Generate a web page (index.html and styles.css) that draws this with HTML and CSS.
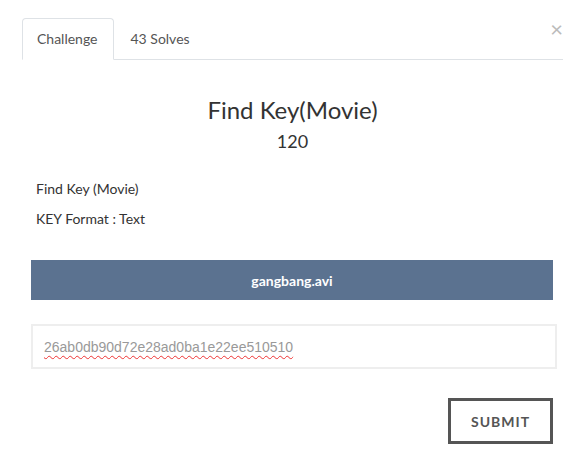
FILE: index.html
```html
<!DOCTYPE html>
<html>
<head>
<meta charset="utf-8">
<link rel="stylesheet" href="styles.css">
</head>
<body>
<div class="modal">
  <span class="close">&times;</span>
  <div class="tabs">
    <div class="tab active">Challenge</div>
    <div class="tab">43 Solves</div>
  </div>
  <h2 class="title">Find Key(Movie)</h2>
  <div class="value">120</div>
  <div class="body">
    <div class="desc">
      <p>Find Key (Movie)</p>
      <p>KEY Format : Text</p>
    </div>
    <div class="file">gangbang.avi</div>
    <div class="answer"><span class="typed">26ab0db90d72e28ad0ba1e22ee510510</span></div>
    <div class="actions"><button class="submit">SUBMIT</button></div>
  </div>
</div>
</body>
</html>
```
FILE: styles.css
```css
html, body {
  margin: 0;
  background: #fff;
}
body {
  font-family: Lato, "Noto Sans", sans-serif;
  color: #333;
}
.modal {
  position: relative;
  padding: 18px 15px 0 22px;
}
.close {
  position: absolute;
  top: 18px;
  right: 15px;
  font-size: 22px;
  line-height: 22px;
  color: #bbb;
}
.tabs {
  display: flex;
  border-bottom: 1px solid #dee2e6;
  height: 41px;
}
.tab {
  padding: 0 14px;
  line-height: 40px;
  font-size: 14px;
  color: #555;
  border: 1px solid transparent;
  border-radius: 4px 4px 0 0;
  margin-bottom: -1px;
  margin-right: 2px;
}
.tab.active {
  padding-right: 15px;
  border-color: #dee2e6 #dee2e6 #fff;
  background: #fff;
}
.title {
  margin: 35px 0 0;
  text-align: center;
  font-size: 24px;
  font-weight: 400;
  line-height: 29px;
}
.value {
  margin-top: 6px;
  text-align: center;
  font-size: 18px;
  line-height: 22px;
}
.body {
  padding: 0 10px 0 9px;
}
.desc {
  margin-top: 27px;
  padding-left: 5px;
  font-size: 14px;
}
.desc p {
  margin: 0 0 10px;
  line-height: 20px;
}
.desc p:last-child {
  margin-bottom: 0;
}
.file {
  margin-top: 31px;
  height: 40px;
  background: #5b7290;
  color: #fff;
  font-weight: 700;
  font-size: 14px;
  display: flex;
  align-items: center;
  justify-content: center;
}
.answer {
  box-sizing: border-box;
  margin: 24px -4px 0 0;
  height: 45px;
  border: 2px solid #eee;
  display: flex;
  align-items: center;
  padding-left: 11px;
}
.typed {
  font-family: "Liberation Sans", Arial, sans-serif;
  font-size: 14px;
  color: #999;
  text-decoration: underline wavy #e33;
  text-decoration-thickness: 1px;
  text-underline-offset: 3px;
}
.actions {
  display: flex;
  justify-content: flex-end;
  margin-top: 29px;
}
.submit {
  box-sizing: border-box;
  width: 105px;
  height: 46px;
  border: 3px solid #555;
  background: #fff;
  color: #555;
  font-family: Lato, sans-serif;
  font-weight: 700;
  font-size: 14px;
  letter-spacing: 1px;
}
```
